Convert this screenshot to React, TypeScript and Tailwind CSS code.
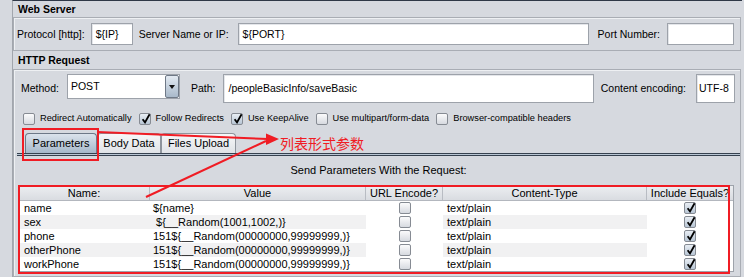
import clsx from "clsx";

const rows = [
  { name: "name", value: "${name}" },
  { name: "sex", value: " ${__Random(1001,1002,)}" },
  { name: "phone", value: "151${__Random(00000000,99999999,)}" },
  { name: "otherPhone", value: "151${__Random(00000000,99999999,)}" },
  { name: "workPhone", value: "151${__Random(00000000,99999999,)}" },
];

function Check({ checked = false }: { checked?: boolean }) {
  return (
    <span
      className={clsx(
        "relative inline-flex h-[12px] w-[12px] shrink-0 items-center justify-center rounded-[2px] border border-[#868b93]",
        checked ? "bg-linear-to-b from-[#e9eef4] to-[#b8c6d5]" : "bg-linear-to-b from-[#fbfbfc] to-[#d7dae0]",
      )}
    >
      {checked ? (
        <svg className="absolute left-[1px] top-[-1px]" height="11" viewBox="0 0 10 11" width="10">
          <path d="M1.6 6.2 L4 9.4 L8.6 1.2" fill="none" stroke="#000" strokeWidth="1.8" />
        </svg>
      ) : null}
    </span>
  );
}

function Field({ className, value }: { className?: string; value: string }) {
  return (
    <div className={clsx("flex items-center border border-[#9da2aa] bg-white pl-[4px] shadow-[inset_1px_1px_0_#e4e6ea]", className)}>
      {value}
    </div>
  );
}

function Tab({ label, selected = false, width }: { label: string; selected?: boolean; width: string }) {
  return (
    <div
      className={clsx(
        "flex h-[20px] items-center justify-center rounded-t-[4px] border border-b-0 text-[11px]",
        width,
        selected
          ? "border-[#6d7887] bg-linear-to-b from-[#dbe3ec] to-[#a6b8ca]"
          : "border-[#8e949c] bg-linear-to-b from-[#f6f7f8] to-[#e0e3e7]",
      )}
    >
      {label}
    </div>
  );
}

export default function App() {
  return (
    <div className="relative h-[277px] w-[744px] overflow-hidden bg-[#d6d9df] font-['Liberation_Sans',Arial,sans-serif] text-[10.5px] leading-none text-black">
      <div className="flex h-full">
        <div className="w-[12px] shrink-0" />
        <div className="flex w-[730px] shrink-0 flex-col border-l border-t border-l-[#a2a6ad] border-t-[#2f3847]">
          <div className="flex h-[16px] items-center pl-[5px] font-bold">Web Server</div>
          <div className="mr-[1px] flex h-[34px] items-center border border-[#a9adb4] pl-[3px] pr-[6px] shadow-[inset_1px_1px_0_#eef0f3]">
            <span>Protocol [http]:</span>
            <Field className="ml-[6px] h-[22px] w-[42px]" value="${IP}" />
            <span className="ml-[6px]">Server Name or IP:</span>
            <Field className="ml-[9px] h-[22px] flex-1" value="${PORT}" />
            <span className="ml-[9px]">Port Number:</span>
            <Field className="ml-[7px] h-[22px] w-[67px]" value="" />
          </div>
          <div className="flex h-[18px] items-center pl-[5px] font-bold">HTTP Request</div>
          <div className="mr-[1px] flex min-h-0 flex-1 flex-col border border-[#a9adb4] shadow-[inset_1px_1px_0_#eef0f3]">
            <div className="mt-[4px] flex h-[29px] items-center pl-[7px] pr-[5px]">
              <span>Method:</span>
              <div className="ml-[8px] flex h-[25px] w-[113px] self-start border border-[#9da2aa] bg-white">
                <span className="flex flex-1 items-center pl-[3px]">POST</span>
                <span className="flex w-[14px] items-center justify-center rounded-[2px] border border-[#6f7987] bg-linear-to-b from-[#e3eaf2] to-[#a9b9ca]">
                  <svg height="4" viewBox="0 0 6 4" width="6">
                    <path d="M0 0 H6 L3 4 Z" fill="#111" />
                  </svg>
                </span>
              </div>
              <span className="ml-[11px]">Path:</span>
              <Field className="ml-[8px] h-[29px] flex-1" value="/peopleBasicInfo/saveBasic" />
              <span className="ml-[7px]">Content encoding:</span>
              <Field className="ml-[10px] h-[29px] w-[39px] !pl-[2px]" value="UTF-8" />
            </div>
            <div className="mt-[10px] flex h-[12px] items-center pl-[9px] text-[9.25px]">
              <Check />
              <span className="ml-[5px]">Redirect Automatically</span>
              <span className="ml-[7px]" />
              <Check checked />
              <span className="ml-[5px]">Follow Redirects</span>
              <span className="ml-[7px]" />
              <Check checked />
              <span className="ml-[5px]">Use KeepAlive</span>
              <span className="ml-[7px]" />
              <Check />
              <span className="ml-[5px]">Use multipart/form-data</span>
              <span className="ml-[7px]" />
              <Check />
              <span className="ml-[5px]">Browser-compatible headers</span>
            </div>
            <div className="ml-[3px] flex flex-col">
              <div className="mt-[8px] flex h-[20px] items-end pl-[8px]">
                <Tab label="Parameters" selected width="w-[72px]" />
                <Tab label="Body Data" width="w-[64px]" />
                <Tab label="Files Upload" width="w-[75px]" />
              </div>
              <div className="h-[3px] border-y border-[#36414f] bg-[#b9c6d4]" />
              <div className="flex h-[29px] items-center justify-center text-[11px]">Send Parameters With the Request:</div>
              <div className="ml-[1px] w-[716px] border border-[#9ea3ab] bg-white text-[11px]">
                <div className="grid h-[15px] grid-cols-[131px_216px_77px_204px_86px] border-b border-[#b3b7be] bg-linear-to-b from-[#eceef1] to-[#d9dce1]">
                  <span className="flex items-center justify-center border-r border-[#b8bcc3]">Name:</span>
                  <span className="flex items-center justify-center border-r border-[#b8bcc3]">Value</span>
                  <span className="flex items-center justify-center border-r border-[#b8bcc3]">URL Encode?</span>
                  <span className="flex items-center justify-center border-r border-[#b8bcc3]">Content-Type</span>
                  <span className="flex items-center justify-center">Include Equals?</span>
                </div>
                {rows.map((row, index) => {
                  const stripe = index % 2 === 1 ? "bg-[#f1f1f2]" : "bg-white";
                  return (
                    <div className="grid h-[14px] grid-cols-[131px_216px_77px_204px_86px]" key={row.name}>
                      <span className={clsx("flex items-center pl-[5px]", stripe)}>{row.name}</span>
                      <span className={clsx("flex items-center whitespace-pre pl-[3px]", stripe)}>{row.value}</span>
                      <span className="flex items-center justify-center bg-white">
                        <Check />
                      </span>
                      <span className={clsx("flex items-center pl-[4px]", stripe)}>text/plain</span>
                      <span className="flex items-center justify-center bg-white">
                        <Check checked />
                      </span>
                    </div>
                  );
                })}
              </div>
            </div>
          </div>
        </div>
      </div>

      {/* annotations drawn over the screenshot */}
      <div className="pointer-events-none absolute left-[22px] top-[128px] h-[33px] w-[77px] border-2 border-[#f01c24]" />
      <div className="pointer-events-none absolute left-[18px] top-[185px] h-[89px] w-[712px] border-2 border-[#f01c24]" />
      <svg className="pointer-events-none absolute left-0 top-0" height="277" viewBox="0 0 744 277" width="744">
        <line stroke="#f01c24" strokeWidth="2" x1="97" x2="268" y1="132" y2="139" />
        <line stroke="#f01c24" strokeWidth="2" x1="146" x2="266" y1="197" y2="141" />
        <polygon fill="#f01c24" points="279,139 266,133.5 266,145" />
      </svg>
      <span className="pointer-events-none absolute left-[280px] top-[134px] font-['Noto_Sans_CJK_SC',sans-serif] text-[14px] leading-[18px] text-[#f01c24]">
        列表形式参数
      </span>
    </div>
  );
}
